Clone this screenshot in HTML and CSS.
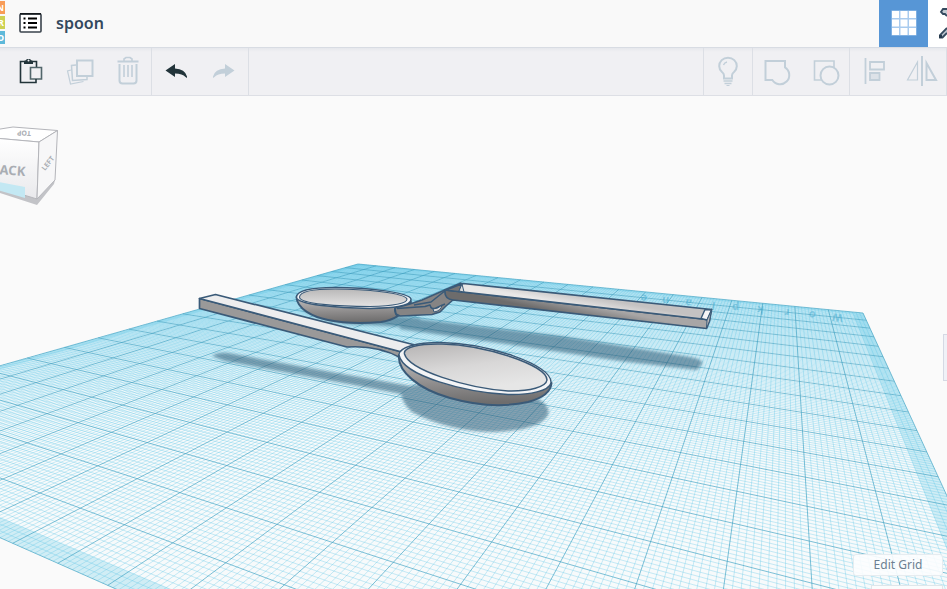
FILE: index.html
```html
<!DOCTYPE html>
<html lang="en">
<head>
<meta charset="utf-8">
<title>spoon</title>
<link rel="stylesheet" href="styles.css">
</head>
<body>
<header class="header">
  <a class="logo" href="#" aria-label="Home">
    <span class="tile tile-orange">N</span>
    <span class="tile tile-lime">R</span>
    <span class="tile tile-blue">D</span>
  </a>
  <button class="menu" aria-label="Designs">
    <svg width="24" height="22" viewBox="0 0 24 22"><rect x="2" y="2" width="21" height="18" rx="1" fill="#fff" stroke="#3a434c" stroke-width="1.600"/><path d="M2 1.800h21" stroke="#101418" stroke-width="1.500"/><path d="M5.500 6.500h2M5.500 11h2M5.500 15.500h2" stroke="#000" stroke-width="2"/><path d="M10 6.500h9M10 11h9M10 15.500h9" stroke="#000" stroke-width="1.800"/></svg>
  </button>
  <h1 class="title">spoon</h1>
  <button class="view-grid" aria-label="Grid view">
    <svg width="26" height="26" viewBox="0 0 26 26"><path fill="#a9cbee" d="M.500.500h25v25H.500z"/><path fill="#fff" d="M1 1h7v7H1zM9.500 1h7v7h-7zM18 1h7v7h-7zM1 9.500h7v7H1zM9.500 9.500h7v7h-7zM18 9.500h7v7h-7zM1 18h7v7H1zM9.500 18h7v7h-7zM18 18h7v7h-7z"/></svg>
  </button>
  <button class="view-next" aria-label="Build">
    <svg width="9" height="32" viewBox="0 0 9 32"><path d="M9 2H5L3 5l2 2h2l2 2" fill="#c4cbd3" stroke="#34495e" stroke-width="1.800"/><path d="M9 21L2 28v2.500h2.500L9 26" fill="#b9c3cd" stroke="#34495e" stroke-width="1.800"/><path d="M1 28h3v3H1z" fill="#26394c"/></svg>
  </button>
</header>
<div class="toolbar" role="toolbar">
  <div class="tools tools-first">
    <button class="tool" aria-label="Paste"><svg viewBox="0 0 48 47"><g fill="none" stroke="#22343a"><path d="M23 34.500h-9.500v-21h16v6" stroke-width="1.600"/><path d="M23.500 19.500h11v11.500h-11z" fill="#f0f0f3" stroke="#52666b" stroke-width="1.600"/><path d="M29 31v3.500h-6" stroke-width="1.600"/></g><path fill="#22343a" d="M17 16v-3l2.500-1v-1h4v1l2.500 1v3z"/><circle cx="21.500" cy="12.500" r="1" fill="#f0f0f3"/></svg></button>
    <button class="tool" aria-label="Duplicate"><svg viewBox="0 0 48 47"><g fill="none" stroke="#c2cfd9"><path d="M22 12.500h15.500V28H22z" stroke-width="2"/><path d="M21 17l-4.500.500 1 15 14.500-1v-3" stroke-width="1.500"/><path d="M16 22l-3.500 1 3 13 13-2.500" stroke-width="1.200"/></g></svg></button>
    <button class="tool" aria-label="Delete"><svg viewBox="0 0 48 47"><g fill="none" stroke="#c2cfd9" stroke-width="1.600"><path d="M14.500 13.500h21" stroke-width="2"/><path d="M21 13v-2l2-1.500h4l2 1.500v2"/><path d="M16.500 16v16.500q0 3 3 3h11q3 0 3-3V16" stroke-width="2"/><path d="M21 17v12M25 17v12M29 17v12"/></g></svg></button>
  </div>
  <div class="tools">
    <button class="tool" aria-label="Undo"><svg viewBox="0 0 48 47"><path fill="#22343a" d="M13.500 22.500L23 16v4.500q10 .500 12 8v1.500l-1.500-1q-3-3.500-10.500-3.500V29z"/></svg></button>
    <button class="tool" aria-label="Redo"><svg viewBox="0 0 48 47"><path fill="#c2cfd9" d="M34.500 22.500L25 16v4.500q-10 .500-12 8v1.500l1.500-1q3-3.500 10.500-3.500V29z"/></svg></button>
  </div>
  <div class="tools tools-right">
    <button class="tool" aria-label="Show all"><svg viewBox="0 0 48 47"><g fill="none" stroke="#c2cfd9" stroke-width="2"><path d="M20 30.500v-3q0-2-2-3.500a8.800 8.300 0 1 1 12 0q-2 1.500-2 3.500v3z"/><path d="M19.500 17q1-2.500 3.500-3" stroke-width="1.400"/><path d="M19.500 33h9M20.500 35.500h7" stroke-width="1.500"/><path d="M22.500 37.500h3" stroke-width="1"/></g></svg></button>
  </div>
  <div class="tools">
    <button class="tool" aria-label="Group"><svg viewBox="0 0 48 47"><path d="M32 19.300A9.200 9.200 0 1 1 19.300 32H12.500V13H32Z" fill="none" stroke="#c2cfd9" stroke-width="2"/></svg></button>
    <button class="tool" aria-label="Ungroup"><svg viewBox="0 0 48 47"><g fill="none" stroke="#c2cfd9"><path d="M13.500 13H33v19H13.500z" stroke-width="1.600"/><circle cx="28.500" cy="27.500" r="9" fill="#f0f0f3" stroke-width="2"/></g></svg></button>
  </div>
  <div class="tools">
    <button class="tool" aria-label="Align"><svg viewBox="0 0 48 47"><g fill="none" stroke="#c2cfd9"><path d="M15.500 10v26M20 14h14v7.500H20z" stroke-width="1.800"/><path d="M20 25h9.500v7H20z" fill="#dde2e8" stroke-width="1.800"/></g></svg></button>
    <button class="tool" aria-label="Mirror"><svg viewBox="0 0 48 47"><g fill="none" stroke="#c2cfd9"><path d="M24 8v30" stroke-width="2"/><path d="M19.500 14v18h-10z" stroke-width="1.200"/><path d="M28.500 15v17h9.500z" stroke-width="2"/></g></svg></button>
  </div>
</div>
<main class="scene">
  <svg class="canvas" viewBox="0 96 947 493" preserveAspectRatio="xMinYMin slice">
    <defs>
      <linearGradient id="bowlIn" x1="0" y1="0" x2=".4" y2="1"><stop offset="0" stop-color="#b5b3b3"/><stop offset=".55" stop-color="#d8d7d7"/><stop offset="1" stop-color="#e6e6e6"/></linearGradient>
      <linearGradient id="bowlIn2" x1="0" y1="0" x2="0" y2="1"><stop offset="0" stop-color="#b9b8b8"/><stop offset="1" stop-color="#e4e3e3"/></linearGradient>
      <linearGradient id="bowlOut" x1="0" y1="0" x2=".1" y2="1"><stop offset="0" stop-color="#c2c0c0"/><stop offset=".6" stop-color="#8e8c8c"/><stop offset="1" stop-color="#6e6d6d"/></linearGradient>
      <linearGradient id="bar" gradientUnits="userSpaceOnUse" x1="580" y1="303" x2="577" y2="317"><stop offset="0" stop-color="#a8a6a6"/><stop offset="1" stop-color="#6d6c6c"/></linearGradient>
      <linearGradient id="trough" gradientUnits="userSpaceOnUse" x1="580" y1="295" x2="578" y2="306"><stop offset="0" stop-color="#c4c2c2"/><stop offset="1" stop-color="#e9e8e8"/></linearGradient>
      <linearGradient id="cubeFront" x1="0" y1="0" x2="0" y2="1"><stop offset="0" stop-color="#fff"/><stop offset="1" stop-color="#e9e9ec"/></linearGradient>
      <filter id="soft" x="-10%" y="-20%" width="120%" height="140%"><feGaussianBlur stdDeviation="1.500"/></filter>
    </defs>
    <g id="plane"></g>
    <g class="shadows" filter="url(#soft)">
      <path d="M400 317L560 336 690 357Q705 360 702 364L697 370 620 361 520 346 400 329Z"/>
      <path d="M300 309Q330 326 370 325L420 328 420 318Z"/>
      <path d="M212 356Q218 352 228 353L320 370 410 386 440 380 536 398Q551 405 548 415 540 430 495 432 450 432 412 412 403 404 401 394L370 388 225 361Z"/>
    </g>
    <g class="solid">
      <path fill="url(#bowlOut)" d="M296.500 297C297 309 313 317 328 320 347 324 370 323 381 322 396 320 405 312 411 302Z"/>
      <path fill="#f1f1f3" stroke-width="1.400" d="M296.500 297C297 290 312 287.500 335 287.500 365 287.500 409 292 411 299 412 307 390 308 370 308.500 340 308 296 305 296.500 297Z"/>
      <path fill="url(#bowlIn2)" stroke-width="1.100" d="M299.500 297C300 291 314 289 335 289 365 289 405 293 407 299 407 304.500 390 306 370 306.500 340 306.500 299 304 299.500 297Z"/>
      <path fill="#868484" stroke-width="1.500" d="M410 304L422 300 447 289 461 283 461 300 453 300 446 306 440 312 432 314.500 400 316 396 314 395 308Z"/>
      <path fill="none" stroke-width="1.500" d="M395 308Q394 312 397 316M397 308.500L425 306.500 430 305Q431 310 436 308L445 304M414 305L431 302 446 290"/>
      <path fill="#d9d8d8" stroke-width="1" d="M433 309Q438 309 442 305 441 311 434 312Z"/>
      <path fill="url(#bar)" stroke-width="1.700" d="M445 290L707 319.500 711.500 309.500 709.500 321 706.500 328.500 453 300Q444 299 445 290Z"/>
      <path fill="url(#trough)" stroke-width="1.700" d="M445 290L463 283.500 711.500 309.500 707 319.500Z"/>
      <path fill="#777" stroke-width="1.200" d="M447 290L462 284 459 291.500Z"/>
      <path fill="#ddd" stroke-width="1" d="M462 284L464 292 459 291Z"/>
      <path fill="#f5f5f6" stroke-width="1.400" d="M705 309.500L711.500 310 707 320 701 318.500Z"/>
      <path fill="#bcbaba" stroke-width="1" d="M707 320L711.500 310 709.500 321 706.500 328.500Z"/>
      <path fill="#9a9999" stroke-width="1.700" d="M199.500 298.500L400 351.500 401 358Q378 345 347 347L199.500 308.500Z"/>
      <path fill="#ededee" stroke-width="1.700" d="M199.500 298.500L215.500 294.500 415 345 400 351.500Z"/>
      <path fill="url(#bowlOut)" d="M399 355C397 371 418 389 450 398 478 406 505 407 528 402 543 398 551 391 551.500 383Z"/>
      <path fill="#f3f4f6" stroke-width="1.400" d="M399 355C399 347 417 342.500 440 342.500 485 343 553 364 551 383 549 391 530 395 508 394.500 466 392.500 403 376 399 355Z"/>
      <path fill="url(#bowlIn)" stroke-width="1.500" d="M404.500 354C403 347 419 343.500 442 344 485 345 547 365 547 380 546 387 530 391.500 508 391 466 388 409 370 404.500 354Z"/>
    </g>
    <g class="cube">
      <path fill="#c2c3c7" stroke="none" d="M-6 186L37 199 55 180 54 184 37 205-6 191Z"/>
      <path fill="#fff" d="M-6 130L13 127 57.500 130.500 39 142-6 138Z"/>
      <path fill="url(#cubeFront)" d="M-6 138L39 142 37 199-6 186Z"/>
      <path fill="#f7f7f8" d="M39 142L57.500 130.500 55 180 37 199Z"/>
      <path fill="#c3e8f3" stroke="none" d="M-6 181L25 187V198L-6 189Z"/>
      <text class="cube-front" transform="translate(25 176) rotate(4)" text-anchor="end">BACK</text>
      <text class="cube-side" transform="translate(45 171) rotate(-52)">LEFT</text>
      <text class="cube-top" transform="translate(31 131) rotate(182)">TOP</text>
    </g>
  </svg>
  <button class="panel-tab" aria-label="Open shapes panel"></button>
  <div class="grid-controls">
    <button class="edit-grid">Edit Grid</button>
    <button class="snap-grid" aria-label="Snap grid"></button>
  </div>
</main>
<script src="scene.js"></script>
</body>
</html>
```
FILE: styles.css
```css
* { box-sizing: border-box; }
body {
  margin: 0;
  height: 100vh;
  display: flex;
  flex-direction: column;
  overflow: hidden;
  background: #fafafa;
  font-family: "Noto Sans", "Open Sans", sans-serif;
  color: #34495e;
}
button { border: 0; padding: 0; background: none; font: inherit; color: inherit; }
svg { display: block; }

.header { display: flex; align-items: center; flex: none; height: 47px; padding-bottom: 1px; background: #f9f9f9; }
.logo { display: flex; flex-direction: column; gap: 2px; width: 5px; height: 44px; align-items: flex-end; overflow: hidden; text-decoration: none; }
.tile { flex: none; width: 14px; height: 13px; padding-right: 1px; color: #fff; font-size: 9px; line-height: 13px; font-weight: 700; text-align: right; }
.tile-orange { background: #f89c58; }
.tile-lime { background: #cdd153; }
.tile-blue { background: #5eb9da; }
.menu { margin-left: 13px; }
.title { flex: 1; margin: 0 0 0 14px; font-size: 16px; line-height: 22px; font-weight: 600; }
.view-grid { display: flex; align-items: center; justify-content: center; width: 49px; height: 47px; background: #5796d6; }
.view-next { display: flex; align-items: center; justify-content: flex-end; width: 19px; height: 47px; background: #fff; }

.toolbar { display: flex; flex: none; height: 49px; border-top: 1px solid #d8dce3; border-bottom: 1px solid #dddfe5; background: linear-gradient(#e6e8ed, #f0f0f3 4px); }
.tools { display: flex; border-right: 1px solid #dcdfe5; }
.tools-first { padding-left: 7px; }
.tools-right { margin-left: auto; border-left: 1px solid #dcdfe5; }
.tool { width: 48px; height: 47px; }

.scene { position: relative; flex: 1; min-height: 0; }
.canvas { width: 100%; height: 100%; }
.base { fill: #f7fafb; }
.band { fill: #7fd3ea; fill-opacity: .32; }
.minor { stroke: #58c5e6; stroke-opacity: .32; stroke-width: 1; }
.major { stroke: #3a9fc2; stroke-opacity: .65; stroke-width: 1; }
.plane-letter { font-size: 11px; font-weight: 700; fill: #3aa3c8; fill-opacity: .45; }
.shadows { fill: #2d5a75; opacity: .55; }
.solid { stroke: #3a5a78; stroke-width: 2; stroke-linejoin: round; }
.cube { stroke: #b4b5ba; stroke-width: 1; }
.cube text { stroke: none; fill: #a9adb3; font-weight: 700; }
.cube-front { font-size: 13px; }
.cube .cube-side { font-size: 7px; }
.cube .cube-top { font-size: 7px; }

.panel-tab { position: absolute; right: 0; top: 238px; width: 4px; height: 47px; border: 1px solid #d5d9e4; border-right: 0; background: #f0f1f7; }
.grid-controls { position: absolute; right: 4px; bottom: 0; display: flex; flex-direction: column; align-items: flex-end; gap: 9px; }
.edit-grid { width: 90px; height: 22px; border: 1px solid #e6ecf0; border-radius: 3px; background: rgba(252, 253, 254, .9); color: #6b7f91; font-size: 12px; line-height: 20px; }
.snap-grid { width: 72px; height: 4px; border: 1px solid #dfe6ea; border-bottom: 0; background: #fbfcfd; }
```
FILE: scene.js
```js
// Projects the 20 x 20 cell workplane onto the canvas and draws its grid.
const anchors = [
  [0, 0, 358, 264],
  [20, 0, 863, 313],
  [8, 20, 12.7, 543.3],
  [19, 14, 883.7, 522.7],
];

function solve(rows) {
  const n = rows.length;
  for (let i = 0; i < n; i++) {
    let p = i;
    for (let r = i; r < n; r++) if (Math.abs(rows[r][i]) > Math.abs(rows[p][i])) p = r;
    [rows[i], rows[p]] = [rows[p], rows[i]];
    for (let r = 0; r < n; r++) {
      if (r === i) continue;
      const f = rows[r][i] / rows[i][i];
      for (let c = i; c <= n; c++) rows[r][c] -= f * rows[i][c];
    }
  }
  return rows.map((row, i) => row[n] / row[i]);
}

const rows = [];
for (const [u, v, x, y] of anchors) {
  rows.push([u, v, 1, 0, 0, 0, -u * x, -v * x, x]);
  rows.push([0, 0, 0, u, v, 1, -u * y, -v * y, y]);
}
const h = solve(rows);

function project(u, v) {
  const w = h[6] * u + h[7] * v + 1;
  return [(h[0] * u + h[1] * v + h[2]) / w, (h[3] * u + h[4] * v + h[5]) / w];
}

const plane = document.getElementById("plane");
function add(tag, attrs, text) {
  const el = document.createElementNS("http://www.w3.org/2000/svg", tag);
  for (const key in attrs) el.setAttribute(key, attrs[key]);
  if (text) el.textContent = text;
  plane.append(el);
}
function quad(cls, u0, v0, u1, v1) {
  const pts = [[u0, v0], [u1, v0], [u1, v1], [u0, v1]].map(([u, v]) => project(u, v).join(","));
  add("polygon", { class: cls, points: pts.join(" ") });
}
function line(cls, u0, v0, u1, v1) {
  const [x1, y1] = project(u0, v0);
  const [x2, y2] = project(u1, v1);
  add("line", { class: cls, x1, y1, x2, y2 });
}

quad("base", 0, 0, 20, 20);
quad("band", 0, 0, 0.3, 20);
quad("band", 19.7, 0, 20, 20);
quad("band", 0.3, 0, 19.7, 0.3);
quad("band", 0.3, 19.7, 19.7, 20);
for (let i = 0; i <= 200; i++) {
  if (i % 10 === 0) continue;
  line("minor", i / 10, 0, i / 10, 20);
  line("minor", 0, i / 10, 20, i / 10);
}
for (let i = 0; i <= 20; i++) {
  line("major", i, 0, i, 20);
  line("major", 0, i, 20, i);
}
[..."Workplane"].forEach((letter, i) => {
  const [x, y] = project(19.4 - i * 0.78, 0.5);
  add("text", { class: "plane-letter", transform: `translate(${x} ${y}) rotate(186)` }, letter);
});
```
